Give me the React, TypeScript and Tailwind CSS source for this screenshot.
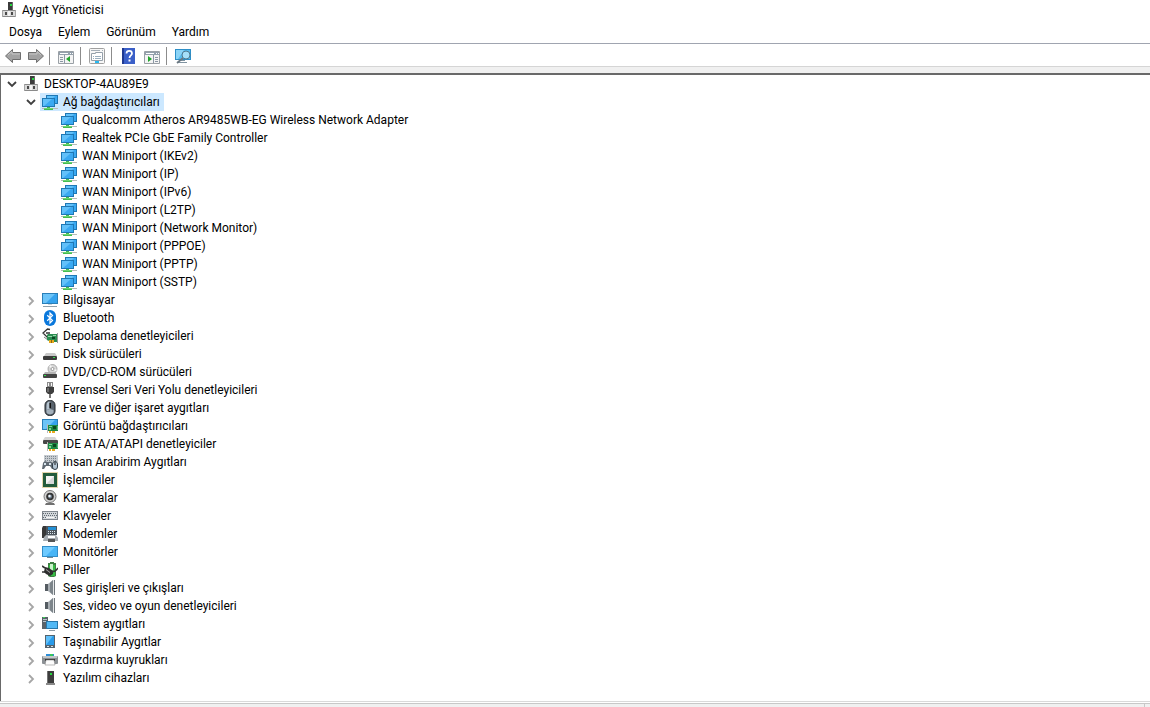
import { useState, type ReactNode } from "react";

function Svg({ children }: { children: ReactNode }) {
  return (
    <svg viewBox="0 0 16 16" className="h-4 w-4 shrink-0" aria-hidden="true">
      {children}
    </svg>
  );
}

const blueScreen = (x: number, y: number, w: number, h: number) => (
  <>
    <rect x={x} y={y} width={w} height={h} fill="#1f78b4" />
    <rect x={x + 1} y={y + 1} width={w - 2} height={h - 2} fill="#3aa9f2" />
    <path d={`M${x + 1} ${y + 1}h${w - 4}l-${w - 5} ${h - 2}h-1z`} fill="#62c1fa" />
  </>
);

const pcbCard = (
  <>
    <rect x="5" y="6" width="1" height="9" fill="#b9b9b9" />
    <rect x="6" y="7" width="10" height="6" fill="#1d8a45" />
    <path d="M7 8h3v1H7zM7 10h2v2H7z" fill="#7fd49a" />
    <rect x="11" y="8" width="3" height="3" fill="#0a4a22" />
    <path d="M15 8h1v4h-1z" fill="#54b877" />
    <path d="M7 13h2v2H7zM10 13h3v2h-3z" fill="#e8a91c" />
  </>
);

const icons = {
  computerNode: (
    <Svg>
      <rect x="7" y="0" width="5" height="9" fill="#3b3b3b" />
      <path d="M11 0h1v9h-1z" fill="#6a6a6a" />
      <rect x="9" y="2" width="2" height="2" fill="#22d53c" />
      <path d="M1 8h14v6H1z" fill="#dadada" />
      <path d="M1 8h14v1H1z" fill="#8d8d8d" />
      <path d="M1 14h14v1H1z" fill="#8a8a8a" />
      <path d="M1 8h1v7H1zM14 8h1v7h-1z" fill="#a5a5a5" />
      <path d="M4 10h2v3H4zM10 10h2v3h-2z" fill="#4a4a4a" />
      <path d="M7 9h2v5H7z" fill="#f4f4f4" />
    </Svg>
  ),
  network: (
    <Svg>
      {blueScreen(4, 1, 12, 9)}
      {blueScreen(0, 4, 13, 9)}
      <path d="M0 14h16v1H0z" fill="#b8bcb8" />
      <path d="M5 13h3v1h3v2H2v-2h3z" fill="#45bb50" />
      <path d="M2 14h9v1H2z" fill="#6ad572" />
    </Svg>
  ),
  computer: (
    <Svg>
      <rect x="0" y="1" width="16" height="11" fill="#2a7fb8" />
      <rect x="1" y="2" width="14" height="9" fill="#35a3ee" />
      <path d="M1 2h12L4 11H1z" fill="#6cc4f8" />
      <path d="M6 12h4v1H6z" fill="#c9d4dc" />
      <path d="M1 14h14v1H1z" fill="#8fa0ab" />
    </Svg>
  ),
  bluetooth: (
    <Svg>
      <rect x="2" y="0" width="12" height="16" rx="6" fill="#0a78dc" />
      <path d="M5.200 5.200l5.300 5.200L8 13V3l2.500 2.600-5.300 5.200" fill="none" stroke="#fff" strokeWidth="1.200" />
    </Svg>
  ),
  storage: (
    <Svg>
      <path d="M8 1.500L5.500 1 1 5l4 4 2-1.500M4 5h4" fill="none" stroke="#343434" strokeWidth="1.300" />
      <path d="M2 9l4 3" stroke="#777" />
      <path d="M5 7l1-1h9v8H9l-4-2z" fill="#2b8c51" />
      <path d="M15 5h1v10h-1z" fill="#999" />
      <path d="M6 8h4v1H6zM11 7h3v1h-3z" fill="#99d8ac" />
      <rect x="10" y="9" width="3" height="2" fill="#0d4625" />
      <path d="M7 12h5v3H7z" fill="#e8a91c" />
      <path d="M9 12h1v3H9z" fill="#8b650c" />
    </Svg>
  ),
  disk: (
    <Svg>
      <path d="M4 7h9l2 3H2z" fill="#c9c9c9" />
      <rect x="1" y="10" width="14" height="4" rx="1" fill="#3b3b3b" />
      <rect x="11" y="11" width="2" height="1" fill="#31df4b" />
    </Svg>
  ),
  dvd: (
    <Svg>
      <circle cx="10.500" cy="5" r="4.500" fill="#d8d8d8" stroke="#8e8e8e" strokeWidth="0.700" />
      <path d="M10.500 5L7 2.300 9 .9zM10.500 5l3.600 2.500.8-1.800z" fill="#f8f8f8" />
      <circle cx="10.500" cy="5" r="1.500" fill="#fff" stroke="#777" strokeWidth="0.700" />
      <path d="M3 8h10l2 3H1z" fill="#b5b5b5" />
      <rect x="1" y="10" width="14" height="4" rx="1" fill="#454545" />
      <rect x="2" y="11" width="2" height="1" fill="#31df4b" />
    </Svg>
  ),
  usb: (
    <Svg>
      <path d="M5 0h6v5H5z" fill="#8b8b8b" />
      <path d="M6 1h1v3H6zM9 1h1v3H9z" fill="#f7f7f7" />
      <path d="M4 5h8v5l-2 2H6l-2-2z" fill="#3e3e3e" />
      <path d="M5 6h2v4H5z" fill="#6b6b6b" />
      <path d="M7 12h2v4H7z" fill="#777" />
    </Svg>
  ),
  mouse: (
    <Svg>
      <rect x="3" y="0.500" width="10" height="15" rx="4.500" fill="#59636d" stroke="#22272c" />
      <path d="M4.500 6c0-3 1-4.500 3-4.500V9l-3 1z" fill="#b5c3cf" />
      <path d="M4.500 10L8 9l3.500 1v2c0 3-7 3-7 0z" fill="#a3b0bb" />
      <path d="M7.500 3h1.500v5H7.500z" fill="#111" />
    </Svg>
  ),
  display: (
    <Svg>
      <rect x="0" y="1" width="16" height="11" fill="#2a7fb8" />
      <rect x="1" y="2" width="14" height="9" fill="#35a3ee" />
      <path d="M1 2h12L4 11H1z" fill="#6cc4f8" />
      {pcbCard}
    </Svg>
  ),
  ide: (
    <Svg>
      <path d="M3 1h10l2 3H1z" fill="#d4d4d4" />
      <rect x="1" y="4" width="15" height="4" rx="1" fill="#474747" />
      {pcbCard}
    </Svg>
  ),
  hid: (
    <Svg>
      <rect x="2" y="1" width="14" height="7" fill="#c6cbd0" />
      <path d="M3 2.500h12M3 4.500h12M3 6.500h12" stroke="#7e8890" strokeDasharray="1 1" />
      <path d="M1 9c1-2 3-2 4-1h2c2-1 3 0 4 2l1 5h-2l-2-3H4l-2 3H0z" fill="#606a73" />
      <path d="M2 9h2v2H2zM7 9h2v2H7z" fill="#d8e4ec" />
      <rect x="10.500" y="7.500" width="5" height="8" rx="2.500" fill="#b3c4d2" stroke="#34404a" />
      <path d="M13 8v3" stroke="#222" />
    </Svg>
  ),
  cpu: (
    <Svg>
      <rect x="1" y="1" width="14" height="14" fill="#245c3c" />
      <rect x="0.500" y="0.500" width="15" height="15" fill="none" stroke="#c8ad58" strokeDasharray="1 1" />
      <rect x="4" y="4" width="8" height="8" fill="#d8d8d8" />
      <path d="M4 4h8L4 12z" fill="#f5f5f5" />
    </Svg>
  ),
  camera: (
    <Svg>
      <path d="M4 13h8l1 2H3z" fill="#707070" />
      <circle cx="8" cy="6.500" r="6" fill="#d2d2d2" stroke="#777" />
      <circle cx="8" cy="6.500" r="3.800" fill="#333" />
      <circle cx="8" cy="6.500" r="2" fill="#718292" />
      <circle cx="7.500" cy="6" r="1.200" fill="#f4f8fb" />
    </Svg>
  ),
  keyboard: (
    <Svg>
      <rect x="0" y="3" width="16" height="9" fill="#7f868d" />
      <rect x="1" y="4" width="14" height="7" fill="#d2d6da" />
      <path d="M1 5.500h14M2 7.500h13M1 9.500h14" stroke="#606970" strokeDasharray="1 1" />
      <path d="M4 9.500h8" stroke="#f5f5f5" />
    </Svg>
  ),
  modem: (
    <Svg>
      <path d="M1 0h3v12H0V2z" fill="#383838" />
      <path d="M4 0h11v9H4z" fill="#4d555c" />
      <path d="M6 1h8v3H6z" fill="#238fd4" />
      <path d="M6 5.500h7M6 7.500h7" stroke="#d9e5ed" strokeDasharray="1 1" />
      <path d="M2 11l2-2h10l2 3v3H1z" fill="#a7adb2" />
      <path d="M6 10h7v2H6z" fill="#fff" />
      <path d="M6 13h7v3H6z" fill="#555" />
    </Svg>
  ),
  monitor: (
    <Svg>
      <rect x="0" y="2" width="16" height="11" fill="#328dc8" />
      <rect x="1" y="3" width="14" height="9" fill="#48b5f6" />
      <path d="M1 3h12L4 12H1z" fill="#6dcaff" />
      <path d="M5 13h6v1H5z" fill="#708894" />
    </Svg>
  ),
  battery: (
    <Svg>
      <path d="M8 0h4v1h2v13l-2 1H8l-2-1V1h2z" fill="#3f7f43" />
      <path d="M7 3h6v11H7z" fill="#35bd44" />
      <path d="M8 2h3v8H8z" fill="#c8f5c9" />
      <path d="M0 4l3 2M0 10h3M10 9c3 2 4-1 6-3" fill="none" stroke="#333" strokeWidth="1.600" />
      <path d="M3 5l4 1 4 3v3l-3 2-4-2-2-2z" fill="#2f2f2f" />
      <path d="M4 7l4 3v1L4 8z" fill="#aaa" />
    </Svg>
  ),
  speaker: (
    <Svg>
      <path d="M3 4h3v7H3z" fill="#555c62" />
      <path d="M6 4l5-4v15l-5-4z" fill="#a7adb2" />
      <path d="M8 3l3-3v15l-3-3z" fill="#7c848a" />
      <path d="M11 0h1v15h-1z" fill="#e4e7e9" />
      <path d="M12.500 0v15" stroke="#70777c" />
    </Svg>
  ),
  system: (
    <Svg>
      <path d="M0 1h6v12H0z" fill="#59636b" />
      <path d="M1 3h4v1H1zM1 5h4v1H1z" fill="#bac4ca" />
      <path d="M1 1h2v1H1z" fill="#32df4c" />
      <rect x="4" y="5" width="12" height="8" fill="#2878aa" />
      <rect x="5" y="6" width="10" height="6" fill="#52b9f5" />
      <path d="M7 14h6v1H7z" fill="#8d9ba5" />
    </Svg>
  ),
  portable: (
    <Svg>
      <path d="M3 1h10v13H3z" fill="#54636e" />
      <path d="M4 2h8v9H4z" fill="#299bea" />
      <path d="M4 2h7l-7 9z" fill="#60c0fa" />
      <path d="M5 12h2v1H5zM9 12h2v1H9z" fill="#d9e2e8" />
    </Svg>
  ),
  printer: (
    <Svg>
      <path d="M4 2h8v4H4z" fill="#2d8dd6" />
      <path d="M8 2h3v3H8z" fill="#37c55a" />
      <rect x="0" y="4" width="16" height="8" rx="1" fill="#8b9094" />
      <path d="M1 4h14v2H1z" fill="#c3c7c9" />
      <path d="M3 7h10v2H3z" fill="#363636" />
      <path d="M4 8h8l1 5H3z" fill="#fdfdfd" stroke="#777" strokeWidth="0.500" />
    </Svg>
  ),
  software: (
    <Svg>
      <path d="M5 1h7v12H5z" fill="#3d3d3d" />
      <path d="M5 1h1v12H5z" fill="#737373" />
      <path d="M8 3h2v2H8z" fill="#26d83e" />
      <path d="M4 13h9v2H4z" fill="#8a8a8a" />
    </Svg>
  ),
};

type IconName = keyof typeof icons;

const adapters = [
  "Qualcomm Atheros AR9485WB-EG Wireless Network Adapter",
  "Realtek PCIe GbE Family Controller",
  "WAN Miniport (IKEv2)",
  "WAN Miniport (IP)",
  "WAN Miniport (IPv6)",
  "WAN Miniport (L2TP)",
  "WAN Miniport (Network Monitor)",
  "WAN Miniport (PPPOE)",
  "WAN Miniport (PPTP)",
  "WAN Miniport (SSTP)",
];

const categories: [IconName, string][] = [
  ["computer", "Bilgisayar"],
  ["bluetooth", "Bluetooth"],
  ["storage", "Depolama denetleyicileri"],
  ["disk", "Disk sürücüleri"],
  ["dvd", "DVD/CD-ROM sürücüleri"],
  ["usb", "Evrensel Seri Veri Yolu denetleyicileri"],
  ["mouse", "Fare ve diğer işaret aygıtları"],
  ["display", "Görüntü bağdaştırıcıları"],
  ["ide", "IDE ATA/ATAPI denetleyiciler"],
  ["hid", "İnsan Arabirim Aygıtları"],
  ["cpu", "İşlemciler"],
  ["camera", "Kameralar"],
  ["keyboard", "Klavyeler"],
  ["modem", "Modemler"],
  ["monitor", "Monitörler"],
  ["battery", "Piller"],
  ["speaker", "Ses girişleri ve çıkışları"],
  ["speaker", "Ses, video ve oyun denetleyicileri"],
  ["system", "Sistem aygıtları"],
  ["portable", "Taşınabilir Aygıtlar"],
  ["printer", "Yazdırma kuyrukları"],
  ["software", "Yazılım cihazları"],
];

function Row({
  icon,
  label,
  open,
  leaf = false,
  selected = false,
  onSelect,
  onToggle,
}: {
  icon: IconName;
  label: string;
  open?: boolean;
  leaf?: boolean;
  selected?: boolean;
  onSelect: () => void;
  onToggle?: () => void;
}) {
  return (
    <div className="flex h-[18px] items-center">
      {leaf ? (
        <span className="w-[19px]" />
      ) : (
        <button
          type="button"
          aria-label={label}
          aria-expanded={!!open}
          onClick={onToggle}
          className="flex h-[18px] w-[19px] items-center justify-center"
        >
          <svg viewBox="0 0 12 12" className="h-3 w-3" fill="none" strokeWidth="1.800" aria-hidden="true">
            {open ? <path d="M2 4l4 4 4-4" stroke="#404040" /> : <path d="M4 3l4 4-4 4" stroke="#a6a6a6" />}
          </svg>
        </button>
      )}
      <button
        type="button"
        onClick={onSelect}
        className={
          selected
            ? "flex h-[18px] items-center gap-[5px] bg-[#cce8ff] pr-1 pl-0.5 whitespace-nowrap"
            : "flex h-[18px] items-center gap-[5px] pr-1 pl-0.5 whitespace-nowrap"
        }
      >
        {icons[icon]}
        <span>{label}</span>
      </button>
    </div>
  );
}

function ToolButton({ label, children }: { label: string; children: ReactNode }) {
  return (
    <button type="button" aria-label={label} className="flex h-5 w-6 items-center justify-center">
      <svg viewBox="0 0 18 18" className="h-[18px] w-[18px] shrink-0" aria-hidden="true">
        {children}
      </svg>
    </button>
  );
}

function Separator() {
  return <span className="mr-1 ml-0.5 h-[18px] w-px bg-[#8c8c8c]" />;
}

export default function App() {
  const [selected, setSelected] = useState("Ağ bağdaştırıcıları");
  const [rootOpen, setRootOpen] = useState(true);
  const [open, setOpen] = useState<string[]>(["Ağ bağdaştırıcıları"]);
  const toggle = (name: string) =>
    setOpen((list) => (list.includes(name) ? list.filter((n) => n !== name) : [...list, name]));
  const networkOpen = open.includes("Ağ bağdaştırıcıları");

  return (
    <div className="flex min-h-screen flex-col bg-white font-[Roboto,'Noto_Sans',sans-serif] text-[12px] leading-[18px] text-black">
      <header className="flex h-5 items-center gap-[5px] pl-px">
        {icons.computerNode}
        <h1>Aygıt Yöneticisi</h1>
      </header>
      <nav className="flex h-6 items-center gap-4 border-b border-[#a0a5b0] pl-[9px]">
        {["Dosya", "Eylem", "Görünüm", "Yardım"].map((item) => (
          <button key={item} type="button">
            {item}
          </button>
        ))}
      </nav>
      <div role="toolbar" aria-label="Araçlar" className="flex h-[22px] items-center pt-0.5">
        <div className="flex w-[47px] pl-px">
          <ToolButton label="Geri">
            <path d="M1.500 9l7-6.500v3h8v7h-8v3z" fill="#a2a2a2" stroke="#6f6f6f" />
            <path d="M4 8l4-3.500V7h8" fill="none" stroke="#c6c6c6" />
          </ToolButton>
          <ToolButton label="İleri">
            <path d="M16.500 9l-7-6.500v3h-8v7h8v3z" fill="#a2a2a2" stroke="#6f6f6f" />
            <path d="M14 8l-4-3.500V7H2" fill="none" stroke="#c6c6c6" />
          </ToolButton>
        </div>
        <Separator />
        <ToolButton label="Konsol ağacı">
          <path d="M1.500 4.500h15v12h-15z" fill="#f4f4f4" stroke="#9aa0a6" />
          <path d="M2 5h14v3H2z" fill="#93a0ac" />
          <path d="M3 6.500h8M13 6.500h1M15 6.500h1" stroke="#fff" />
          <path d="M7.500 8v8M3 10.500h3M3 12.500h3M3 14.500h3" stroke="#8b98a5" />
          <path d="M13 9v6l-4-3z" fill="#22a52c" />
        </ToolButton>
        <Separator />
        <ToolButton label="Özellikler">
          <rect x="1.500" y="1.500" width="15" height="15" rx="1" fill="#f7f7f7" stroke="#a0a0a0" />
          <path d="M3 3.500h9M14 3.500h1" stroke="#a5afb8" />
          <path d="M3.500 6.500h4v-1h7v8h-11z" fill="#fff" stroke="#95a0aa" />
          <path d="M5 9.500h1M7 9.500h6M5 11.500h1M7 11.500h6" stroke="#9aafbf" />
          <path d="M7 15h4" stroke="#27b9f0" strokeWidth="2" />
        </ToolButton>
        <Separator />
        <ToolButton label="Yardım">
          <rect x="3" y="1" width="13" height="16" fill="#3a5fc8" />
          <path d="M3 1h2v16H3z" fill="#1f3990" />
          <path d="M7.500 6.500c0-3.500 5.500-3.500 5.500 0 0 2-2.500 2-2.500 4.500" fill="none" stroke="#fff" strokeWidth="1.700" />
          <path d="M9.500 12.500h2v2h-2z" fill="#fff" />
        </ToolButton>
        <ToolButton label="Eylem bölmesi">
          <path d="M1.500 4.500h15v12h-15z" fill="#f4f4f4" stroke="#9aa0a6" />
          <path d="M2 5h14v3H2z" fill="#93a0ac" />
          <path d="M3 6.500h8M13 6.500h1M15 6.500h1" stroke="#fff" />
          <path d="M10.500 8v8M12 10.500h3M12 12.500h3M12 14.500h3" stroke="#8b98a5" />
          <path d="M5 9v6l4-3z" fill="#22a52c" />
        </ToolButton>
        <Separator />
        <ToolButton label="Donanım değişikliklerini tara">
          <path d="M1 2h16v11H1z" fill="#2d8fc8" />
          <path d="M2 3h14v9H2z" fill="#55bbef" />
          <path d="M2 3h8l-6 9H2z" fill="#8bd4f7" />
          <path d="M7 13h4v1H7zM4 15h9v1H4z" fill="#8093a0" />
          <path d="M9 11l-6 5" stroke="#6b7882" strokeWidth="1.800" />
          <circle cx="12" cy="8" r="4" fill="#a5dff9" stroke="#50798f" />
        </ToolButton>
      </div>
      <div className="h-[7px] border-t border-[#d5d5d5] bg-[#f0f0f0]" />
      <main className="flex-1 border-t-2 border-l border-[#696969] pb-3 pl-px">
        <Row
          icon="computerNode"
          label="DESKTOP-4AU89E9"
          open={rootOpen}
          selected={selected === "DESKTOP-4AU89E9"}
          onSelect={() => setSelected("DESKTOP-4AU89E9")}
          onToggle={() => setRootOpen(!rootOpen)}
        />
        {rootOpen && (
          <ul className="pl-[19px]">
            <li>
              <Row
                icon="network"
                label="Ağ bağdaştırıcıları"
                open={networkOpen}
                selected={selected === "Ağ bağdaştırıcıları"}
                onSelect={() => setSelected("Ağ bağdaştırıcıları")}
                onToggle={() => toggle("Ağ bağdaştırıcıları")}
              />
              {networkOpen && (
                <ul className="pl-[19px]">
                  {adapters.map((name) => (
                    <li key={name}>
                      <Row icon="network" label={name} leaf selected={selected === name} onSelect={() => setSelected(name)} />
                    </li>
                  ))}
                </ul>
              )}
            </li>
            {categories.map(([icon, name]) => (
              <li key={name}>
                <Row
                  icon={icon}
                  label={name}
                  open={open.includes(name)}
                  selected={selected === name}
                  onSelect={() => setSelected(name)}
                  onToggle={() => toggle(name)}
                />
              </li>
            ))}
          </ul>
        )}
      </main>
      <footer className="border-t border-[#d9d9d9] pt-px">
        <div className="flex h-1 justify-end border-t border-[#c8c8c8] bg-[#f0f0f0] pr-[5px]">
          <span className="w-px bg-[#c8c8c8]" />
        </div>
      </footer>
    </div>
  );
}
